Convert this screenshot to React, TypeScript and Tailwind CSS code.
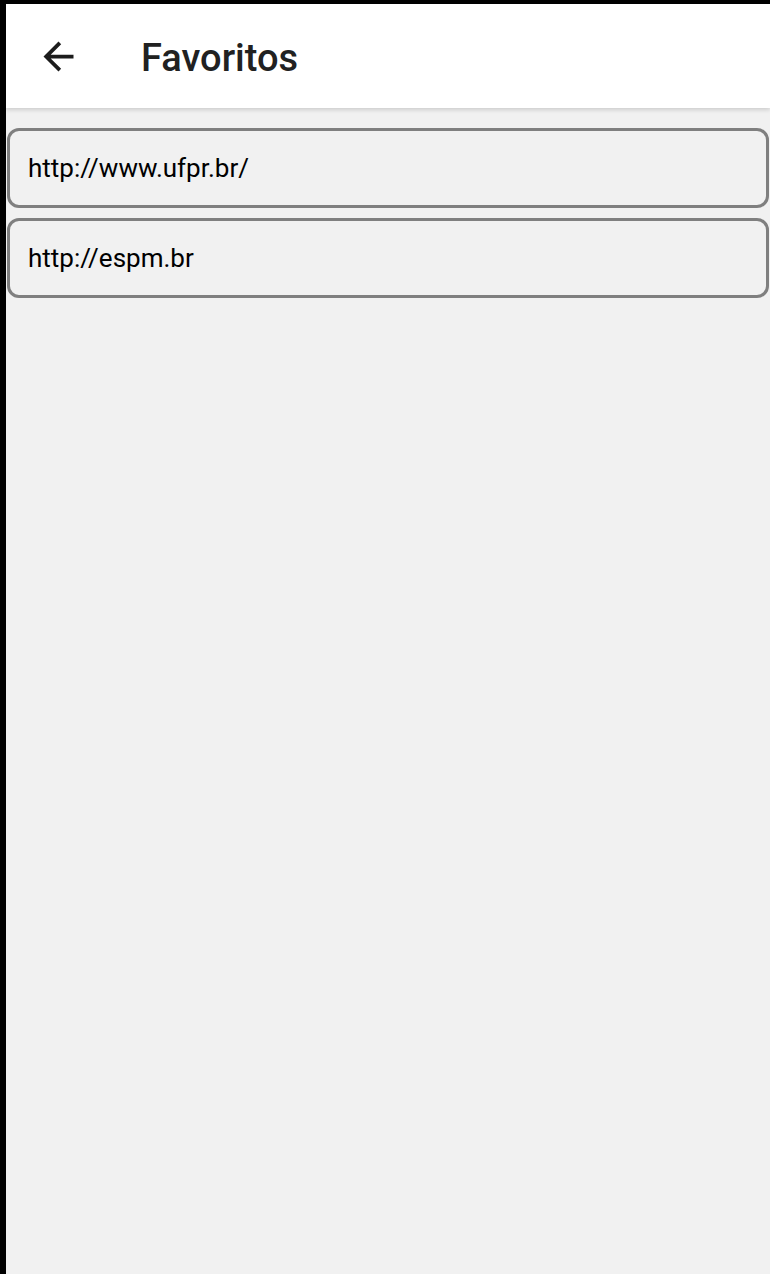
import { ArrowLeft } from "lucide-react";

const favoritos = ["http://www.ufpr.br/", "http://espm.br"];

export default function App() {
  return (
    <div className="w-[770px] h-[1274px] bg-black pt-[4px] pl-[6px] flex flex-col font-['Roboto',sans-serif]">
      {/* Toolbar */}
      <header className="h-[104px] bg-white flex items-center shadow-[0_2px_4px_rgba(0,0,0,0.15)] relative z-10 shrink-0">
        <svg viewBox="0 0 24 24" className="w-[45px] h-[45px] ml-[30px] fill-[#1c1c1c]">
          <path d="M20 11H7.83l5.59-5.59L12 4l-8 8 8 8 1.41-1.41L7.83 13H20v-2z" />
        </svg>
        <h1 className="ml-[60px] mt-[4px] text-[38px] font-medium text-[#212121]">Favoritos</h1>
      </header>

      {/* Lista */}
      <main className="flex-1 bg-[#f1f1f1] pt-[20px] pl-[1px] pr-[1px] flex flex-col gap-[10px]">
        {favoritos.map((url) => (
          <div
            key={url}
            className="h-[80px] border-[3px] border-[#7f7f7f] rounded-[12px] flex items-center pl-[18px] text-[26px] text-black"
          >
            {url}
          </div>
        ))}
      </main>
    </div>
  );
}
